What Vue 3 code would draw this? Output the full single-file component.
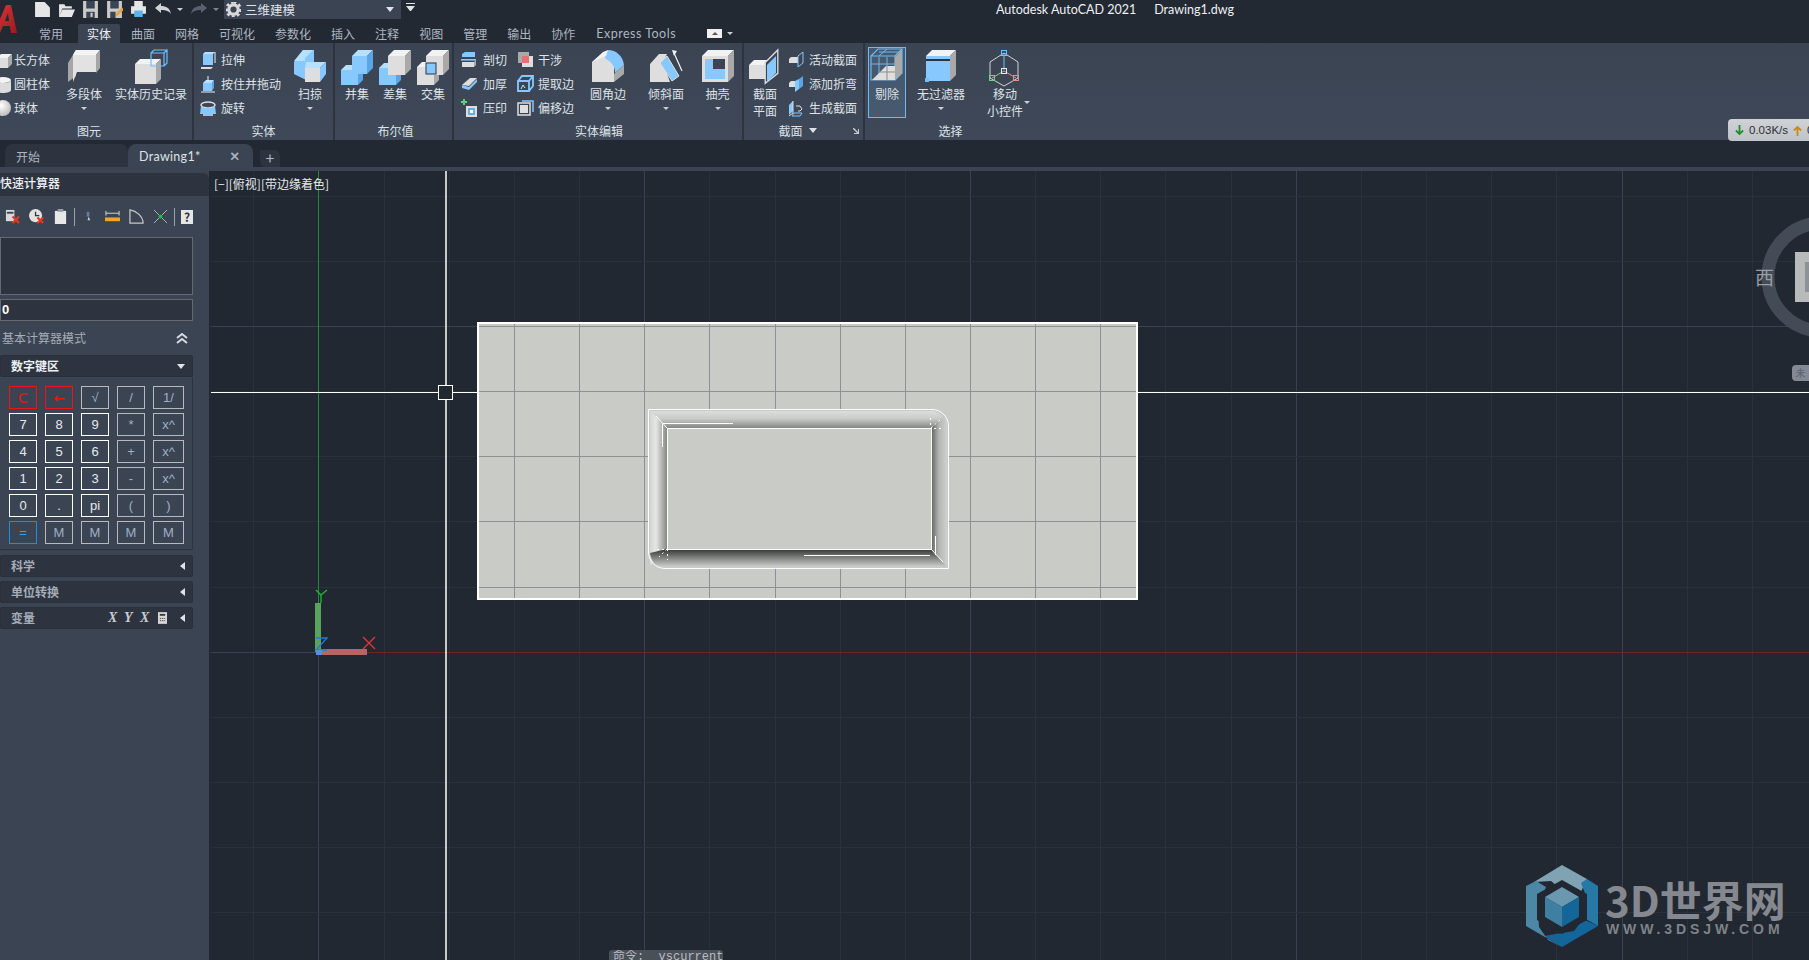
<script setup>
// iso box: front face, top and right side, returned as svg markup
const box = (x, y, w, h, d, front = '#dedede', top = '#f2f2f2', side = '#a9a9a9') =>
	`<path fill="${top}" d="M${x} ${y + d}l${d} ${-d}h${w}l${-d} ${d}z"/>` +
	`<path fill="${side}" d="M${x + w} ${y + d}l${d} ${-d}v${h}l${-d} ${d}z"/>` +
	`<rect fill="${front}" x="${x}" y="${y + d}" width="${w}" height="${h}"/>`
const wire = (x, y, w, h, d, c = '#6fc0ff') =>
	`<path fill="none" stroke="${c}" stroke-width="1.2" d="M${x} ${y + d}h${w}v${h}h${-w}zM${x} ${y + d}l${d} ${-d}h${w}l${-d} ${d}M${x + w + d} ${y}v${h}l${-d} ${d}"/>`
const blue = ['#86c8ff', '#b7e0ff', '#5aa5e6']

const icons = {
	cuboid: box(2, 3, 11, 10, 4),
	cylinder: '<ellipse cx="8" cy="5" rx="8" ry="3" fill="#f4f4f4"/><path fill="#dcdcdc" d="M0 5v10c0 4 16 4 16 0V5c0 4-16 4-16 0z"/>',
	sphere: '<defs><radialGradient id="sp" cx=".4" cy=".35" r=".7"><stop offset="0" stop-color="#fff"/><stop offset="1" stop-color="#b8b8b8"/></radialGradient></defs><circle cx="8" cy="9" r="8" fill="url(#sp)"/>',
	polysolid: '<path fill="#a6a6a6" d="M0 32V13L8 0v26z"/><path fill="#e2e2e2" d="M5 5l3-5h20v22H9l-4 10z"/><path fill="#f3f3f3" d="M8 0h24l-4 5H5z"/><path fill="#a6a6a6" d="M28 5l4-5v18l-4 5z"/>',
	history: box(0, 9, 21, 20, 5) + wire(16, 0, 13, 13, 3),
	sweep: '<path fill="#86c8ff" d="M0 12L9 0h11v12l-8 8v10L0 24z"/><path fill="#b7e0ff" d="M9 0h10l-8 8v3H0z"/><path fill="#b7e0ff" d="M12 12h20l-6 6H11z"/><path fill="#86c8ff" d="M26 18l6-6v12l-6 8z"/><rect x="11" y="18" width="15" height="14" fill="#dedede"/>',
	union: box(0, 15, 17, 15, 5, ...blue) + box(11, 0, 15, 18, 6, ...blue),
	subtract: box(0, 13, 17, 17, 5, ...blue) + box(9, 0, 17, 19, 6),
	intersect: box(0, 12, 17, 18, 5) + box(9, 0, 17, 19, 6) + '<rect x="9" y="13" width="10" height="11" fill="#86c8ff" stroke="#2d3440"/>',
	fillet: '<path fill="#dedede" d="M0 12l12-9 10 9v20H0z"/><path fill="#86c8ff" d="M16 0c8 0 15 6 16 15l-9 8c0-6-3-11-9-14l-2-4z"/><path fill="#f2f2f2" d="M0 12l11-10 5-2-2 6z"/><path fill="#a9a9a9" d="M22 24l10-9v9l-10 8z"/>',
	taper: '<path fill="#dedede" d="M0 32V14L9 4h8l-4 8 7 20z"/><path fill="#86c8ff" stroke="#dedede" d="M10 13l7-7 12 20-7 5z"/><path stroke="#f3f3f3" stroke-width="1.200" d="M24 3l8 18"/><path fill="#f3f3f3" d="M22 0l5 1-3 5z"/>',
	shell: box(0, 0, 26, 26, 6) + '<rect x="3" y="9" width="20" height="20" fill="#3b4453"/><path fill="#86c8ff" d="M3 9h8v10h12v10H3z"/>',
	secplane: box(0, 10, 17, 14, 5) + '<path fill="#3b4453" stroke="#dedede" stroke-width="1.5" d="M17 14l14-14v26L17 37z" transform="scale(.9 .9) translate(1 0)"/><path fill="#86c8ff" d="M18 15l9-9v17l-9 9z"/>',
	cull: wire(0, 0, 24, 24, 7, '#6fb9ec') + '<path fill="none" stroke="#6fb9ec" d="M8 8v23M16 8v23M0 15h24M24 15l7-7M24 23l7-7M16 0l-8 7M8 3h23"/>' +
		'<path fill="#dedede" d="M1 31l14-14h9v14z"/><path fill="#a9a9a9" d="M24 8l7-7v23l-7 7z"/><path fill="none" stroke="#8b8b8b" d="M16 17v14M24 23H8"/>',
	filter: box(1, 0, 24, 25, 6, '#86c8ff', '#f2f2f2', '#a9a9a9') + '<rect x="1" y="9" width="24" height="2" fill="#2d3440"/><rect x="0" y="28" width="4" height="4" fill="#6fc0ff"/>',
	gizmo: '<path fill="none" stroke="#cfd3d8" d="M15 3L1 12v16l14 8 14-8V12z"/><path stroke="#6fc0ff" d="M15 4v16"/><path stroke="#6fd48a" d="M15 21L3 28"/><path stroke="#ef8a8a" d="M15 21l12 7"/><rect x="12.5" y=".5" width="5" height="5" fill="none" stroke="#6fc0ff"/><rect x="12.5" y="18.5" width="5" height="5" fill="none" stroke="#e8e8e8"/><rect x="0.5" y="25.5" width="5" height="5" fill="none" stroke="#6fd48a"/><rect x="24.5" y="25.5" width="5" height="5" fill="none" stroke="#ef8a8a"/>',
	extrude: '<path fill="#86c8ff" d="M3 3h10v11H3z"/><path fill="#b7e0ff" d="M3 3l2-2h10l-2 2z"/><path fill="#dedede" d="M1 16h12l-2 2H1z"/><path stroke="#f3f3f3" d="M15 1v11"/>',
	press: '<path fill="#86c8ff" d="M3 8h9v8H3z"/><path fill="#b7e0ff" d="M3 8l3-3h8l-2 3z"/><path fill="#5aa5e6" d="M12 8l2-3v8l-2 3z"/><path stroke="#f3f3f3" d="M8 1v5M1 17h14"/>',
	revolve: '<ellipse cx="8" cy="6" rx="7" ry="3" fill="none" stroke="#dedede" stroke-width="1.5"/><path fill="#86c8ff" d="M1 7c3 3 11 3 14 0l1 8h-3v2H3v-2H0z"/>',
	slice: '<path fill="#86c8ff" d="M1 3l3-2h10v5H1z"/><rect y="8" width="15" height="1.6" fill="#86c8ff"/><path fill="#dedede" d="M1 11h12v5H1z"/><path fill="#a9a9a9" d="M13 11l2-2v5l-2 2z"/>',
	thicken: '<path fill="#dedede" d="M1 10L9 3h7l-8 8z"/><path fill="#86c8ff" d="M1 10l7 2 8-8v3l-8 8-7-2z"/><path fill="#8b8b8b" d="M1 9L9 3l-1 1z"/>',
	imprint: '<rect x="5" y="7" width="11" height="11" fill="#dedede"/><rect x="8" y="10" width="5" height="5" fill="#fff" stroke="#3d9be9" stroke-width="1.5"/><path stroke="#5fd07a" stroke-width="2" d="M3 0v6M0 3h6"/>',
	interfere: '<rect x="1" y="1" width="11" height="11" fill="#a9a9a9"/><rect x="5" y="5" width="11" height="11" fill="#dedede"/><rect x="5" y="5" width="7" height="7" fill="#e86d74"/>',
	extract: '<path fill="none" stroke="#86c8ff" stroke-width="1.8" d="M1 6h11v10H1zM1 6l4-5h11l-4 5M16 1v10l-4 5"/><path fill="none" stroke="#dedede" d="M4 14l2-4 2 3"/>',
	offset: '<rect x="1" y="4" width="12" height="12" fill="#3b4453" stroke="#dedede" stroke-width="1.5"/><rect x="3" y="6" width="8" height="8" fill="#dedede"/><path fill="none" stroke="#86c8ff" stroke-width="1.5" d="M5 2h11v11"/>',
	livesec: '<path fill="#dedede" d="M1 8l2-2h7v6H1z"/><path fill="none" stroke="#86c8ff" d="M10 5l5-4v11l-5 4z"/>',
	bend: '<path fill="#dedede" d="M1 8l2-2h4v6H1z"/><path fill="#86c8ff" d="M7 6l4-2v10l-4 3z"/><path fill="#5aa5e6" d="M11 4l4-3v10l-4 3z"/>',
	gensec: '<path fill="#86c8ff" d="M1 6l4-4v10l-4 4z"/><path fill="none" stroke="#dedede" d="M5 2v12l-4 3M8 7h4l2 3-2 2h-2"/><path fill="none" stroke="#86c8ff" d="M6 14h8l-2 3H4z"/>'
}

// one entry per ribbon panel, widths follow the ribbon of the reference
const panels = [
	{ title: '图元', w: 194, tr: 14, tools: [
		{ rows: [['cuboid', '长方体'], ['cylinder', '圆柱体'], ['sphere', '球体']], w: 65, off: -5, gap: 2 },
		{ label: ['多段体'], icon: 'polysolid', w: 48, caret: true },
		{ label: ['实体历史记录'], icon: 'history', w: 86 }
	] },
	{ title: '实体', w: 141, pad: 6, tools: [
		{ rows: [['extrude', '拉伸'], ['press', '按住并拖动'], ['revolve', '旋转']], w: 84, gap: 4 },
		{ label: ['扫掠'], icon: 'sweep', w: 52, caret: true }
	] },
	{ title: '布尔值', w: 119, pad: 3, tl: 4, tools: [
		{ label: ['并集'], icon: 'union', w: 38 },
		{ label: ['差集'], icon: 'subtract', w: 38 },
		{ label: ['交集'], icon: 'intersect', w: 38 }
	] },
	{ title: '实体编辑', w: 290, pad: 7, tl: 2, tools: [
		{ rows: [['slice', '剖切'], ['thicken', '加厚'], ['imprint', '压印']], w: 56, gap: 5 },
		{ rows: [['interfere', '干涉'], ['extract', '提取边'], ['offset', '偏移边']], w: 58, gap: 4 },
		{ label: ['圆角边'], icon: 'fillet', w: 66, caret: true },
		{ label: ['倾斜面'], icon: 'taper', w: 50, caret: true },
		{ label: ['抽壳'], icon: 'shell', w: 53, caret: true }
	] },
	{ title: '截面', w: 121, pad: 2, tr: 12, more: true, tools: [
		{ label: ['截面', '平面'], icon: 'secplane', w: 38 },
		{ rows: [['livesec', '活动截面'], ['bend', '添加折弯'], ['gensec', '生成截面']], w: 78, gap: 4, off: 4 }
	] },
	{ title: '选择', w: 175, pad: 3, tr: 4, tools: [
		{ label: ['剔除'], icon: 'cull', w: 38, active: true },
		{ label: ['无过滤器'], icon: 'filter', w: 70, caret: true },
		{ label: ['移动', '小控件'], icon: 'gizmo', w: 58, sideCaret: true }
	] }
]

const tabs = ['常用', '实体', '曲面', '网格', '可视化', '参数化', '插入', '注释', '视图', '管理', '输出', '协作']

const keys = [
	['C', 'r'], ['←', 'r'], ['√', 'g'], ['/', 'g'], ['1/', 'g'],
	['7', 'w'], ['8', 'w'], ['9', 'w'], ['*', 'g'], ['x^', 'g'],
	['4', 'w'], ['5', 'w'], ['6', 'w'], ['+', 'g'], ['x^', 'g'],
	['1', 'w'], ['2', 'w'], ['3', 'w'], ['-', 'g'], ['x^', 'g'],
	['0', 'w'], ['.', 'w'], ['pi', 'w'], ['(', 'g'], [')', 'g'],
	['=', 'b'], ['M', 'g'], ['M', 'g'], ['M', 'g'], ['M', 'g']
]

// drawing grid: 65.16px cells, every 5th line is heavier
const step = 65.16
const gridX = []
for (let i = -1; i < 24; i++) gridX.push({ p: Math.round(318.4 + i * step) + 0.5, major: i % 5 === 0 })
const gridY = []
for (let i = -3; i < 11; i++) gridY.push({ p: Math.round(326 + i * step) + 0.5, major: i % 5 === 0 })
const solidX = gridX.filter((l) => l.p > 479 && l.p < 1137)
const solidY = gridY.filter((l) => l.p > 323 && l.p < 598)
</script>

<template>
	<div class="app">
		<header class="titlebar">
			<svg class="logo" viewBox="0 0 18 28">
				<defs><linearGradient id="logoA" x1="0" y1="0" x2="1" y2="1"><stop offset="0" stop-color="#e2343a" /><stop offset="1" stop-color="#9c1a20" /></linearGradient></defs>
				<path fill="url(#logoA)" d="M-6 28L6 0h5l6 28h-6l-1-7H3l-3 7zM5 16h4L8 8z" />
			</svg>
			<div class="qat">
				<svg viewBox="0 0 16 16"><path fill="#e6e6e6" d="M1 1h9l5 5v9H1z" /></svg>
				<svg viewBox="0 0 16 16"><path fill="#e6e6e6" d="M1 3h5l1 2h6v2H4l-3 8zM4 8h12l-3 7H1z" /></svg>
				<svg viewBox="0 0 16 16"><path fill="#c9c9c9" d="M1 0h14v16H1z" /><path fill="#3b4453" d="M4 0h8v7H4zM4 10h8v6H4z" /><path fill="#c9c9c9" d="M8 11h2v4H8z" /></svg>
				<svg viewBox="0 0 16 16"><path fill="#c9c9c9" d="M1 0h14v16H1z" /><path fill="#3b4453" d="M4 0h8v7H4zM4 10h5v6H4z" /><path fill="#e8a33d" d="M9 15l1-4 5-5 2 2-5 5z" /></svg>
				<svg viewBox="0 0 16 16"><path fill="#e6e6e6" d="M4 0h8v5H4zM1 5h14v7H1z" /><path fill="#5cb3f0" d="M4 9h8v6H4z" /></svg>
				<svg viewBox="0 0 16 12" class="wide"><path fill="#cfd2d6" d="M0 5l6-5v3c5 0 9 2 10 8-2-3-5-4-10-4v3z" /></svg>
				<i class="tiny-caret" />
				<svg viewBox="0 0 16 12" class="wide dim"><path fill="#596170" d="M16 5l-6-5v3C5 3 1 5 0 11c2-3 5-4 10-4v3z" /></svg>
				<i class="tiny-caret dim" />
			</div>
			<div class="workspace">
				<svg viewBox="0 0 16 16" class="gear"><circle cx="8" cy="8" r="5" fill="none" stroke="#d8d8d8" stroke-width="3.4" /><path stroke="#d8d8d8" stroke-width="3" stroke-dasharray="3 2.5" fill="none" d="M8 .5A7.5 7.5 0 1 1 7.9 .5" /></svg>
				<span>三维建模</span>
				<i class="caret" />
			</div>
			<div class="qat-more"><b /><i class="caret" /></div>
			<div class="app-title"><span>Autodesk AutoCAD 2021</span><span>Drawing1.dwg</span></div>
		</header>

		<nav class="ribbon-tabs">
			<a v-for="t in tabs" :key="t" :class="{ on: t === '实体' }">{{ t }}</a>
			<a class="express">Express Tools</a>
			<span class="tab-toggle"><em /></span>
			<i class="tiny-caret" />
		</nav>

		<section class="ribbon">
			<div v-for="p in panels" :key="p.title" class="panel" :style="{ width: p.w + 'px' }">
				<div class="panel-body" :style="{ paddingLeft: (p.pad || 0) + 'px' }">
					<template v-for="(tool, i) in p.tools" :key="i">
						<div v-if="tool.rows" class="rows" :style="{ width: tool.w + 'px', marginLeft: (tool.off || 0) + 'px' }">
							<div v-for="r in tool.rows" :key="r[1]" class="row" :style="{ gap: tool.gap + 'px' }">
								<svg viewBox="0 0 17 18" v-html="icons[r[0]]" />
								<span>{{ r[1] }}</span>
							</div>
						</div>
						<div v-else class="large" :class="{ active: tool.active }" :style="{ width: tool.w + 'px' }">
							<svg viewBox="0 0 32 32" v-html="icons[tool.icon]" />
							<span v-for="l in tool.label" :key="l">{{ l }}</span>
							<i v-if="tool.caret" class="tiny-caret" />
							<i v-if="tool.sideCaret" class="tiny-caret side" />
						</div>
					</template>
				</div>
				<div class="panel-title" :style="{ paddingLeft: (p.tl || 0) + 'px', paddingRight: (p.tr || 0) + 'px' }">
					{{ p.title }}
					<i v-if="p.more" class="caret" />
					<svg v-if="p.more" class="launcher" viewBox="0 0 6 6"><path fill="#c8ccd2" d="M0 0l1 0 4 4V1h1v5H1V5h3L0 1z" /></svg>
				</div>
			</div>
		</section>

		<nav class="doc-tabs">
			<div class="doc start">开始</div>
			<div class="doc current">Drawing1*<b>×</b></div>
			<div class="doc-add">+</div>
		</nav>
		<div class="strip" />

		<main class="work">
			<aside class="calc">
				<div class="calc-title">快速计算器</div>
				<div class="calc-tools">
					<svg viewBox="0 0 16 16"><rect x="1" y="1" width="9" height="12" fill="#d8d8d8" /><rect x="2" y="3" width="7" height="2" fill="#3b4453" /><path stroke="#e23a26" stroke-width="2.4" d="M8 8l7 7M15 8l-7 7" /></svg>
					<svg viewBox="0 0 16 16"><circle cx="7" cy="7" r="7" fill="#e2e2e2" /><path stroke="#333" stroke-width="1.4" fill="none" d="M7 3v4h4" /><path stroke="#e23a26" stroke-width="2.4" d="M9 9l6 6M15 9l-6 6" /></svg>
					<svg viewBox="0 0 16 16"><path fill="#e8e8e8" d="M2 2h12v14H2z" /><path fill="#9a9a9a" d="M5 0h6v3H5z" /></svg>
					<i class="sep" />
					<svg viewBox="0 0 16 16"><path fill="#5d7d9a" d="M6 3h3v5H6z" /><path fill="#c8c8c8" d="M8 8l2 4H7z" /></svg>
					<svg viewBox="0 0 16 16"><path stroke="#dcdcdc" fill="none" d="M1 2v5M15 2v5M1 4.500h14" /><rect x="0" y="9" width="16" height="4" fill="#e6a92c" /></svg>
					<svg viewBox="0 0 16 16"><path fill="none" stroke="#c8c8c8" stroke-width="1.3" d="M1 1v14h14C15 8 8 2 1 1z" /></svg>
					<svg viewBox="0 0 16 16"><path stroke="#d0d0d0" stroke-width=".8" d="M1 1l14 14M15 1L1 15" /><circle cx="8" cy="8" r="2" fill="#19c23c" /></svg>
					<i class="sep" />
					<span class="help">?</span>
				</div>
				<div class="calc-history" />
				<div class="calc-input">0</div>
				<div class="calc-mode">
					<span>基本计算器模式</span>
					<svg viewBox="0 0 12 12"><path fill="none" stroke="#d8dbe0" stroke-width="2" d="M1 6l5-4 5 4M1 11l5-4 5 4" /></svg>
				</div>
				<div class="section head"><span>数字键区</span><i class="caret" /></div>
				<div class="keypad">
					<button v-for="(k, i) in keys" :key="i" :class="k[1]">{{ k[0] }}</button>
				</div>
				<div class="section"><span>科学</span><i class="left-caret" /></div>
				<div class="section"><span>单位转换</span><i class="left-caret" /></div>
				<div class="section">
					<span>变量</span>
					<div class="vars"><em>X</em><em>Y</em><em>X</em>
						<svg viewBox="0 0 10 13"><rect width="10" height="13" fill="#d8d8d8" /><rect x="2" y="2" width="6" height="2" fill="#333" /><path stroke="#333" stroke-dasharray="1.5 1" d="M2 7h6M2 9.500h6" /></svg>
					</div>
					<i class="left-caret" />
				</div>
			</aside>

			<div class="viewport">
				<svg class="canvas" viewBox="211 171 1598 789">
					<defs>
						<linearGradient id="bevT" x1="0" y1="0" x2="0" y2="1"><stop offset="0" stop-color="#dcdedb" /><stop offset=".45" stop-color="#c9cbc8" /><stop offset="1" stop-color="#858785" /></linearGradient>
						<linearGradient id="bevB" x1="0" y1="0" x2="0" y2="1"><stop offset="0" stop-color="#333433" /><stop offset=".55" stop-color="#8a8c8a" /><stop offset="1" stop-color="#cdcfcc" /></linearGradient>
						<linearGradient id="bevL" x1="0" y1="0" x2="1" y2="0"><stop offset="0" stop-color="#d4d6d3" /><stop offset=".35" stop-color="#e6e7e4" /><stop offset="1" stop-color="#868886" /></linearGradient>
						<linearGradient id="bevR" x1="0" y1="0" x2="1" y2="0"><stop offset="0" stop-color="#5f615f" /><stop offset=".5" stop-color="#b4b6b3" /><stop offset="1" stop-color="#cfd1ce" /></linearGradient>
					</defs>

					<line v-for="l in gridX" :key="'x' + l.p" :x1="l.p" :x2="l.p" y1="171" y2="960" :class="l.major ? 'major' : 'minor'" />
					<line v-for="l in gridY" :key="'y' + l.p" x1="211" x2="1809" :y1="l.p" :y2="l.p" :class="l.major ? 'major' : 'minor'" />

					<!-- world axes -->
					<line x1="318.500" x2="318.500" y1="171" y2="603" stroke="#248a38" />
					<line x1="368" x2="1809" y1="652.500" y2="652.500" stroke="#6f2428" />

					<!-- solid seen from above -->
					<rect x="478" y="323" width="659" height="276" fill="#c9cbc7" stroke="#fff" stroke-width="2" />
					<line v-for="l in solidX" :key="'sx' + l.p" :x1="l.p" :x2="l.p" y1="324" y2="598" stroke="#8d9096" />
					<line v-for="l in solidY" :key="'sy' + l.p" x1="479" x2="1136" :y1="l.p" :y2="l.p" stroke="#8d9096" />

					<path fill="#c9cbc7" d="M648 409H932A17 17 0 0 1 949 426V569H665A17 17 0 0 1 648 552z" />
					<path fill="url(#bevT)" d="M650 411H932Q940 411 947 424L931 428H667z" />
					<path fill="url(#bevL)" d="M650 411L667 428V549L650 566z" />
					<path fill="url(#bevR)" d="M931 428L947 414V567L931 549z" />
					<path fill="url(#bevB)" d="M667 549H931L947 567H664Q652 567 650 553z" />
					<rect x="667.500" y="428.500" width="264" height="121" fill="#c9cbc7" stroke="#fff" />
					<path fill="none" stroke="#fff" stroke-width="1" d="M648.500 409.500H932A16.500 16.500 0 0 1 948.500 426V568.500H665A16.500 16.500 0 0 1 648.500 552zM662.500 447V423.500H733M804 555.500H930M935.500 536V555M656 416L667 428M931 549L943 562" />
					<path fill="none" stroke="#fff" stroke-dasharray="2 3" d="M931 428L940 420M930.500 418V428M934 428.500H942M667 549L659 557M667.500 549V560M657 549.500H667" />

					<!-- cursor crosshair and pickbox -->
					<line x1="446" x2="446" y1="171" y2="960" stroke="#fff" stroke-width="1.500" />
					<line x1="211" x2="477" y1="392.500" y2="392.500" stroke="#fff" />
					<line x1="1138" x2="1809" y1="392.500" y2="392.500" stroke="#fff" />
					<rect x="438.500" y="385.500" width="14" height="14" fill="#212831" stroke="#fff" />

					<!-- ucs icon -->
					<rect x="315" y="603" width="6" height="49" fill="#5aa35c" />
					<path fill="none" stroke="#1fb32e" stroke-width="1.400" d="M316 590l5 5 6-5M321 595v8" />
					<rect x="318" y="649" width="49" height="6" fill="#b96466" />
					<path fill="none" stroke="#2277e6" stroke-width="1.400" d="M316 638h11l-11 12h11" />
					<rect x="316" y="650" width="6" height="5" fill="#5b8fd4" />
					<path stroke="#e8343c" stroke-width="1.300" d="M363 637l12 12M375 637l-12 12" />

					<!-- view cube -->
					<circle cx="1822" cy="277" r="54" fill="none" stroke="#434b56" stroke-width="13" />
					<rect x="1795" y="252" width="40" height="50" fill="#b9bbbb" />
					<rect x="1805" y="262" width="30" height="30" fill="#8e9297" />
				</svg>

				<div class="view-label">[−][俯视][带边缘着色]</div>
				<div class="compass">西</div>
				<div class="wcs">未</div>
				<div class="cmdline">命令: _vscurrent</div>

				<div class="watermark">
					<svg viewBox="0 0 72 82" class="mark">
						<path fill="#7fa3b3" d="M36 0L61 14 50 37 25 16 8 17z" />
						<path fill="#2679a6" d="M61 14l11 7v40L58 53 60 31 55 18z" />
						<path fill="#14669a" d="M72 61L36 82 18 71l30-5 9-12z" />
						<path fill="#4c87a6" d="M36 82L0 61V21l10-5 10 6-8 22 1 18 9 13z" />
						<path fill="#212831" d="M36 15l25 14v26L36 69 11 55V29z" />
						<path fill="#6a98ae" d="M36 22l17 10-17 10-17-10z" />
						<path fill="#3f7fa2" d="M19 32l17 10v20L19 52z" />
						<path fill="#14659a" d="M53 32L36 42v20l17-10z" />
					</svg>
					<div class="mark-text">
						<strong>3D世界网</strong>
						<small>WWW.3DSJW.COM</small>
					</div>
				</div>
			</div>
		</main>

		<div class="speed">
			<svg viewBox="0 0 10 12"><path fill="none" stroke="#1d8f2a" stroke-width="2" d="M5 0v10M1 6l4 4 4-4" /></svg>
			<span>0.03K/s</span>
			<svg viewBox="0 0 10 12"><path fill="none" stroke="#c98a10" stroke-width="2" d="M5 12V2M1 6l4-4 4 4" /></svg>
			<span>0</span>
		</div>
	</div>
</template>

<style>
html,
body {
	margin: 0;
	background: #212831;
}
</style>

<style scoped>
.app {
	position: relative;
	width: 1809px;
	height: 960px;
	overflow: hidden;
	background: #222933;
	color: #dfe3e8;
	font: 12px/14px "Noto Sans CJK SC", "Noto Sans", sans-serif;
}
.caret {
	display: inline-block;
	border: 4px solid transparent;
	border-top: 5px solid #dfe3e8;
	border-bottom: 0;
}
.tiny-caret {
	display: block;
	border: 3px solid transparent;
	border-top: 3px solid #c9ced6;
	border-bottom: 0;
}
.tiny-caret.dim {
	border-top-color: #7c8492;
}
.left-caret {
	margin-left: auto;
	margin-right: 7px;
	border: 4px solid transparent;
	border-right: 5px solid #dfe3e8;
	border-left: 0;
}

.titlebar {
	display: flex;
	align-items: flex-start;
	height: 24px;
}
.logo {
	width: 18px;
	height: 28px;
	margin-top: 5px;
	flex: none;
}
.qat {
	display: flex;
	align-items: center;
	gap: 7px;
	margin-left: 16px;
	height: 18px;
}
.qat svg {
	width: 17px;
	height: 17px;
}
.qat svg.wide {
	width: 18px;
	height: 12px;
}
.qat .tiny-caret {
	margin-left: -2px;
}
.workspace {
	display: flex;
	align-items: center;
	width: 177px;
	height: 19px;
	margin-left: 5px;
	padding: 0 7px 0 2px;
	box-sizing: border-box;
	background: #3b4453;
	font-size: 12.500px;
}
.workspace .gear {
	width: 15px;
	height: 15px;
	margin-right: 4px;
}
.workspace .caret {
	margin-left: auto;
}
.qat-more {
	margin: 3px 0 0 5px;
	width: 9px;
}
.qat-more b {
	display: block;
	height: 1px;
	margin-bottom: 2px;
	background: #dfe3e8;
}
.qat-more .caret {
	display: block;
}
.app-title {
	display: flex;
	gap: 18px;
	margin-left: 581px;
	font: 12.500px/19px Lato, "Noto Sans", sans-serif;
	color: #eef0f3;
}

.ribbon-tabs {
	display: flex;
	align-items: center;
	gap: 2px;
	height: 19px;
	padding-left: 30px;
	color: #aeb6c1;
}
.ribbon-tabs a {
	padding: 0 9px;
	line-height: 19px;
}
.ribbon-tabs a:nth-child(2) {
	margin-left: 4px;
}
.ribbon-tabs a.on {
	background: #3b4453;
	color: #eef0f3;
	border-radius: 2px 2px 0 0;
}
.ribbon-tabs .express {
	margin-left: 1px;
	font-family: Lato, "Noto Sans", sans-serif;
	font-size: 12.500px;
	letter-spacing: 0.500px;
}
.tab-toggle {
	width: 15px;
	height: 9px;
	margin-left: 20px;
	margin-right: 3px;
	background: #f0f0f0;
	display: flex;
	align-items: center;
	justify-content: center;
}
.tab-toggle em {
	border: 3px solid transparent;
	border-bottom: 3px solid #555;
	border-top: 0;
}

.ribbon {
	display: flex;
	height: 97px;
	background: linear-gradient(#3b4453, #3e4858);
}
.panel {
	flex: none;
	display: flex;
	flex-direction: column;
	box-sizing: border-box;
	border-right: 2px solid #2d3440;
	overflow: hidden;
}
.panel:last-child {
	border-right: 0;
}
.panel-body {
	flex: 1;
	display: flex;
	min-height: 0;
}
.rows {
	flex: none;
	padding-top: 5px;
}
.row {
	display: flex;
	align-items: center;
	height: 24px;
	white-space: nowrap;
}
.row svg {
	flex: none;
	width: 17px;
	height: 18px;
}
.large {
	flex: none;
	display: flex;
	flex-direction: column;
	align-items: center;
	padding-top: 7px;
	box-sizing: border-box;
	position: relative;
	white-space: nowrap;
}
.large svg {
	width: 32px;
	height: 32px;
	margin-bottom: 3px;
	overflow: visible;
}
.large span {
	line-height: 17px;
}
.large .tiny-caret {
	margin-top: 5px;
}
.large .tiny-caret.side {
	position: absolute;
	right: 4px;
	top: 53px;
}
.large.active {
	height: 71px;
	margin-top: 4px;
	padding-top: 2px;
	background: #47596f;
	outline: 1px solid #6fb8f0;
	outline-offset: -1px;
}
.large.active svg {
	margin-bottom: 4px;
}
.panel-title {
	position: relative;
	flex: none;
	display: flex;
	align-items: center;
	justify-content: center;
	gap: 6px;
	height: 19px;
	box-sizing: border-box;
}
.launcher {
	position: absolute;
	right: 4px;
	top: 7px;
	width: 6px;
	height: 6px;
}

.doc-tabs {
	display: flex;
	align-items: flex-end;
	height: 27px;
	padding-left: 5px;
	box-sizing: border-box;
}
.doc {
	height: 23px;
	line-height: 25px;
	box-sizing: border-box;
	border-radius: 8px 8px 0 0;
}
.doc.start {
	width: 123px;
	padding-left: 11px;
	background: #2d3440;
	color: #aeb6c1;
}
.doc.current {
	display: flex;
	justify-content: space-between;
	width: 125px;
	padding: 0 13px 0 11px;
	background: #3b4453;
	color: #dfe3e8;
	font-family: Lato, "Noto Sans", sans-serif;
	font-size: 12.500px;
	letter-spacing: 0.300px;
}
.doc.current b {
	font-size: 17px;
	line-height: 23px;
	color: #aeb6c1;
}
.doc-add {
	width: 20px;
	height: 17px;
	margin-left: 7px;
	background: #2d3440;
	border-radius: 0 6px 0 6px;
	font-size: 16px;
	line-height: 15px;
	text-align: center;
	color: #aeb6c1;
}
.strip {
	height: 4px;
	background: #3b4453;
}

.work {
	display: flex;
	height: 789px;
}
.calc {
	flex: none;
	width: 209px;
	margin-right: 2px;
	background: #3b4453;
	box-sizing: border-box;
	padding-top: 2px;
	padding-right: 16px;
}
.calc-title {
	height: 23px;
	line-height: 19px;
	margin-right: -16px;
	background: #2d3440;
	border-radius: 0 6px 0 0;
	color: #eef0f3;
	font-weight: 500;
}
.calc-tools {
	display: flex;
	align-items: center;
	height: 41px;
	padding-left: 5px;
	gap: 9px;
}
.calc-tools svg {
	flex: none;
	width: 15px;
	height: 15px;
}
.sep {
	flex: none;
	width: 1px;
	height: 18px;
	margin: 0 -3px;
	background: #9aa2ad;
}
.help {
	flex: none;
	width: 12px;
	height: 14px;
	background: #e6e6e6;
	color: #333;
	font-weight: 700;
	line-height: 14px;
	text-align: center;
}
.calc-history,
.calc-input {
	box-sizing: border-box;
	background: #2d3440;
	border: 1px solid #666a70;
}
.calc-history {
	height: 58px;
}
.calc-input {
	height: 22px;
	margin-top: 4px;
	padding-left: 1px;
	line-height: 20px;
	font-weight: 700;
	color: #fff;
	font-family: "Liberation Sans", sans-serif;
	font-size: 13px;
}
.calc-mode {
	display: flex;
	align-items: center;
	justify-content: space-between;
	height: 34px;
	padding-left: 2px;
	padding-right: 5px;
	color: #a5acb6;
}
.calc-mode svg {
	width: 12px;
	height: 12px;
}
.section {
	display: flex;
	align-items: center;
	height: 22px;
	margin-bottom: 4px;
	padding-left: 10px;
	box-sizing: border-box;
	background: #2d3440;
	border: 1px solid #2a303b;
	border-radius: 2px;
	font-weight: 700;
	color: #a6adb8;
}
.section.head {
	margin-bottom: 0;
	color: #eef0f3;
}
.section.head .caret {
	margin-left: auto;
	margin-right: 7px;
}
.vars {
	display: flex;
	align-items: center;
	gap: 4px;
	margin-left: auto;
}
.vars em {
	width: 12px;
	font: italic 700 14px "Liberation Serif", serif;
	color: #c8ccd2;
}
.vars svg {
	width: 9px;
	height: 12px;
	margin-left: 2px;
}
.vars + .left-caret {
	margin-left: 13px;
}
.keypad {
	display: grid;
	grid-template-columns: repeat(4, 28px) 31px;
	grid-auto-rows: 23px;
	gap: 4px 8px;
	height: 173px;
	margin-bottom: 5px;
	padding: 9px 0 0 9px;
	box-sizing: border-box;
	border: 1px solid #2d3440;
	border-left: 0;
	border-top: 0;
}
.keypad button {
	padding: 0;
	background: transparent;
	border: 1px solid #b6b9bd;
	font: 13px "Liberation Sans", "DejaVu Sans", sans-serif;
	color: #9fb0c4;
}
.keypad button.w {
	border-color: #fff;
	color: #e6eaef;
}
.keypad button.r {
	border-color: #e8151c;
	color: #e8151c;
	font: 14px "DejaVu Sans", sans-serif;
}
.keypad button.b {
	border-color: #1192e8;
	color: #2aa4f4;
}

.viewport {
	position: relative;
	flex: 1;
	overflow: hidden;
	background: #212831;
}
.canvas {
	display: block;
	width: 1598px;
	height: 789px;
}
.minor {
	stroke: #2a313d;
}
.major {
	stroke: #3a4150;
}
.view-label {
	position: absolute;
	left: 3px;
	top: 6px;
	font-size: 12px;
	color: #e6e8ec;
}
.compass {
	position: absolute;
	left: 1544px;
	top: 94px;
	font-size: 19px;
	line-height: 24px;
	color: #9a9da1;
}
.wcs {
	position: absolute;
	right: 0;
	top: 194px;
	width: 17px;
	height: 16px;
	background: #858995;
	border-radius: 4px 0 0 4px;
	font-size: 10px;
	line-height: 16px;
	text-align: center;
	color: #5d616c;
}
.cmdline {
	position: absolute;
	left: 398px;
	bottom: 0;
	width: 114px;
	height: 10px;
	overflow: hidden;
	background: #4a5058;
	border-radius: 3px 3px 0 0;
	padding-left: 4px;
	box-sizing: border-box;
	font-family: "Liberation Mono", "Noto Sans CJK SC", monospace;
	font-size: 12px;
	line-height: 14px;
	color: #b9bdc2;
	white-space: nowrap;
}
.watermark {
	position: absolute;
	left: 1315px;
	top: 694px;
	display: flex;
	gap: 7px;
	align-items: center;
}
.mark {
	width: 72px;
	height: 82px;
}
.mark-text {
	display: flex;
	flex-direction: column;
}
.mark-text strong {
	height: 46px;
	font: 700 42px/46px "Noto Sans CJK SC", sans-serif;
	color: #85898f;
	white-space: nowrap;
}
.mark-text small {
	font: 700 14px/15px "Liberation Sans", sans-serif;
	letter-spacing: 3.900px;
	color: #7f8389;
	white-space: nowrap;
	margin-left: 1px;
}

.speed {
	position: absolute;
	left: 1728px;
	top: 119px;
	display: flex;
	align-items: center;
	gap: 5px;
	width: 81px;
	height: 22px;
	padding-left: 7px;
	box-sizing: border-box;
	overflow: hidden;
	background: linear-gradient(#cfd2d6, #bfc3c8);
	border-radius: 4px 0 0 4px;
	font: 11.500px "Liberation Sans", sans-serif;
	color: #2b2f38;
	white-space: nowrap;
}
.speed svg {
	flex: none;
	width: 9px;
	height: 11px;
}
</style>
